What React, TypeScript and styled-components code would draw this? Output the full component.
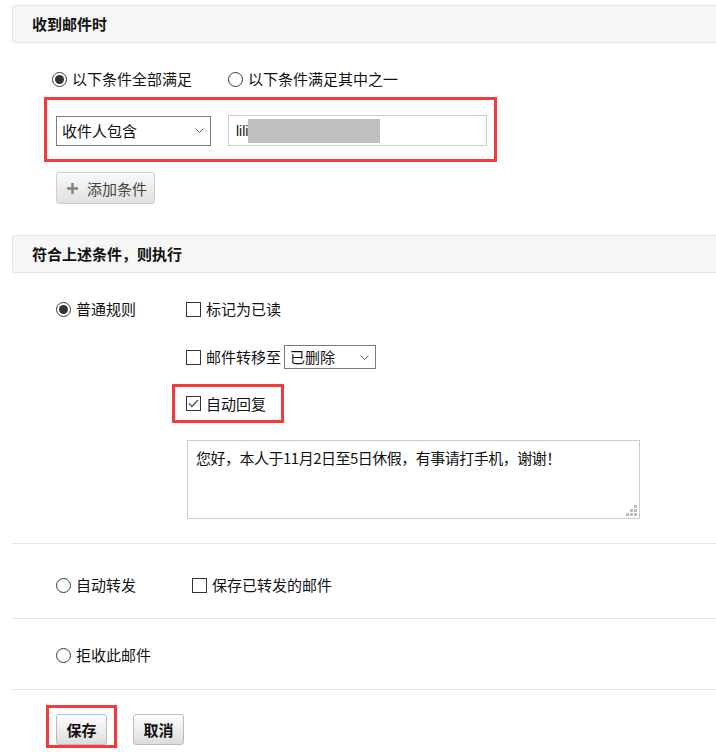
import React from 'react';
import styled, { createGlobalStyle } from 'styled-components';

const GlobalStyle = createGlobalStyle`
  * { box-sizing: border-box; }
  body {
    margin: 0;
    background: #fff;
    font-family: "Noto Sans CJK SC", "Microsoft YaHei", sans-serif;
    font-size: 15px;
    line-height: 20px;
    color: #111;
  }
`;

const Page = styled.div`
  padding: 5px 0 0 12px;
  overflow: hidden;
`;

const SectionHeader = styled.div<{ $top?: number }>`
  height: 38px;
  margin-top: ${(p) => p.$top ?? 0}px;
  display: flex;
  align-items: center;
  padding-left: 19px;
  background: #f6f6f6;
  border: 1px solid #e4e4e4;
  border-right: none;
  border-radius: 3px 0 0 3px;
  font-weight: bold;
  color: #111;
`;

const ConditionBody = styled.div`
  display: flex;
  flex-direction: column;
  align-items: flex-start;
  padding: 26px 0 0 32px;
`;

const MatchRow = styled.div`
  display: flex;
  align-items: center;
  gap: 36px;
  height: 20px;
  padding-left: 8px;
`;

const Option = styled.label<{ $gap?: number }>`
  display: flex;
  align-items: center;
  gap: ${(p) => p.$gap ?? 5}px;
  height: 20px;
  white-space: nowrap;
  color: #111;
`;

const Radio = styled.span<{ $checked?: boolean }>`
  position: relative;
  width: 15px;
  height: 15px;
  flex: none;
  border: 1px solid #3a3a3a;
  border-radius: 50%;
  background: #fff;

  &::after {
    content: '';
    display: ${(p) => (p.$checked ? 'block' : 'none')};
    position: absolute;
    inset: 2px;
    border-radius: 50%;
    background: #333;
  }
`;

const Box = styled.span`
  width: 15px;
  height: 15px;
  flex: none;
  display: flex;
  align-items: center;
  justify-content: center;
  border: 1px solid #333;
  background: #fff;
`;

const Highlight = styled.div`
  border: 3px solid #f23b3b;
`;

const ConditionBox = styled(Highlight)`
  display: flex;
  align-items: center;
  gap: 17px;
  margin-top: 8px;
  padding: 15px 7px 13px 9px;
`;

const SelectBox = styled.div<{ $w: number; $h: number }>`
  width: ${(p) => p.$w}px;
  height: ${(p) => p.$h}px;
  display: flex;
  align-items: center;
  justify-content: space-between;
  padding: 0 6px 0 5px;
  border: 1px solid #7a7a7a;
  background: #fff;
  color: #111;
`;

const TextInput = styled.div`
  width: 259px;
  height: 31px;
  display: flex;
  align-items: center;
  padding-left: 7px;
  border: 1px solid #cccccc;
  font-family: "Liberation Sans", Arial, sans-serif;
  font-size: 14px;
  color: #111;
`;

const Redacted = styled.span`
  width: 132px;
  height: 24px;
  background: #c0c0c0;
`;

const AddButton = styled.button`
  margin: 10px 0 0 12px;
  width: 99px;
  height: 32px;
  display: flex;
  align-items: center;
  gap: 9px;
  padding: 0 0 0 10px;
  border: 1px solid #cfcfcf;
  border-radius: 3px;
  background: linear-gradient(#fafafa, #e0e0e0);
  font-family: inherit;
  font-size: 15px;
  color: #444;
`;

const RuleBody = styled.div`
  display: flex;
  padding: 26px 0 24px 44px;
`;

const LeftCol = styled.div<{ $w: number }>`
  width: ${(p) => p.$w}px;
  flex: none;
`;

const Actions = styled.div`
  display: flex;
  flex-direction: column;
  align-items: flex-start;
`;

const MoveRow = styled.div`
  display: flex;
  align-items: center;
  gap: 3px;
  margin-top: 26px;
  height: 24px;
`;

const ReplyBox = styled(Highlight)`
  display: flex;
  align-items: center;
  width: 112px;
  height: 39px;
  margin: 15px 0 0 -14px;
  padding-left: 11px;
`;

const ReplyArea = styled.div`
  position: relative;
  margin: 17px 0 0 1px;
  width: 453px;
  height: 79px;
`;

const TextArea = styled.textarea`
  display: block;
  width: 100%;
  height: 100%;
  padding: 7px 8px;
  border: 1px solid #cccccc;
  outline: none;
  resize: none;
  font-family: "Noto Sans CJK SC", "Microsoft YaHei", sans-serif;
  font-size: 15px;
  line-height: 20px;
  letter-spacing: -0.5px;
  color: #111;
`;

const Grip = styled.svg`
  position: absolute;
  right: 3px;
  bottom: 3px;
`;

const Divider = styled.div<{ $tint?: string }>`
  height: 1px;
  background: ${(p) => p.$tint ?? '#e6e6e6'};
`;

const PlainRow = styled.div<{ $top: number; $bottom: number }>`
  display: flex;
  align-items: center;
  padding: ${(p) => p.$top}px 0 ${(p) => p.$bottom}px 44px;
`;

const Footer = styled.div`
  display: flex;
  align-items: flex-start;
  gap: 16px;
  padding: 15px 0 0 34px;
`;

const SaveBox = styled(Highlight)`
  padding: 6px 7px 0 7px;
`;

const FormButton = styled.button<{ $top?: number }>`
  display: block;
  width: 51px;
  height: 31px;
  margin-top: ${(p) => p.$top ?? 0}px;
  padding: 0;
  border: 1px solid #bcbcbc;
  border-radius: 3px;
  background: linear-gradient(#ffffff, #dcdcdc);
  font-family: inherit;
  font-size: 15px;
  font-weight: bold;
  color: #111;
`;

const Chevron = () => (
  <svg width="9" height="5" viewBox="0 0 9 5">
    <polyline points="0.5,0.5 4.5,4.5 8.5,0.5" fill="none" stroke="#666" strokeWidth="1" />
  </svg>
);

const Check = () => (
  <svg width="11" height="9" viewBox="0 0 11 9">
    <polyline points="1,4.5 4,7.5 10,1" fill="none" stroke="#555" strokeWidth="1.3" />
  </svg>
);

const Plus = () => (
  <svg width="11" height="11" viewBox="0 0 11 11">
    <path d="M5.5 0v11M0 5.5h11" stroke="#808080" strokeWidth="2.4" />
  </svg>
);

const ResizeGrip = () => (
  <Grip width="11" height="11" viewBox="0 0 11 11">
    {[
      [8, 0],
      [4, 4],
      [8, 4],
      [0, 8],
      [4, 8],
      [8, 8],
    ].map(([x, y]) => (
      <rect key={`${x}-${y}`} x={x} y={y} width="3" height="3" fill="#bdbdbd" />
    ))}
  </Grip>
);

const RadioOption = ({ label, checked }: { label: string; checked?: boolean }) => (
  <Option>
    <Radio $checked={checked} />
    {label}
  </Option>
);

const CheckOption = ({ label, checked }: { label: string; checked?: boolean }) => (
  <Option>
    <Box>{checked && <Check />}</Box>
    {label}
  </Option>
);

export default function App() {
  return (
    <Page>
      <GlobalStyle />
      <SectionHeader>收到邮件时</SectionHeader>
      <ConditionBody>
        <MatchRow>
          <RadioOption label="以下条件全部满足" checked />
          <RadioOption label="以下条件满足其中之一" />
        </MatchRow>
        <ConditionBox>
          <SelectBox $w={155} $h={30}>
            收件人包含
            <Chevron />
          </SelectBox>
          <TextInput>
            lili
            <Redacted />
          </TextInput>
        </ConditionBox>
        <AddButton>
          <Plus />
          添加条件
        </AddButton>
      </ConditionBody>

      <SectionHeader $top={31}>符合上述条件，则执行</SectionHeader>
      <RuleBody>
        <LeftCol $w={130}>
          <RadioOption label="普通规则" checked />
        </LeftCol>
        <Actions>
          <CheckOption label="标记为已读" />
          <MoveRow>
            <CheckOption label="邮件转移至" />
            <SelectBox $w={92} $h={24}>
              已删除
              <Chevron />
            </SelectBox>
          </MoveRow>
          <ReplyBox>
            <CheckOption label="自动回复" checked />
          </ReplyBox>
          <ReplyArea>
            <TextArea defaultValue="您好，本人于11月2日至5日休假，有事请打手机，谢谢！" />
            <ResizeGrip />
          </ReplyArea>
        </Actions>
      </RuleBody>
      <Divider />

      <PlainRow $top={31} $bottom={23}>
        <LeftCol $w={136}>
          <RadioOption label="自动转发" />
        </LeftCol>
        <CheckOption label="保存已转发的邮件" />
      </PlainRow>
      <Divider />

      <PlainRow $top={26} $bottom={24}>
        <RadioOption label="拒收此邮件" />
      </PlainRow>
      <Divider $tint="#e3ecdc" />

      <Footer>
        <SaveBox>
          <FormButton>保存</FormButton>
        </SaveBox>
        <FormButton $top={9}>取消</FormButton>
      </Footer>
    </Page>
  );
}
